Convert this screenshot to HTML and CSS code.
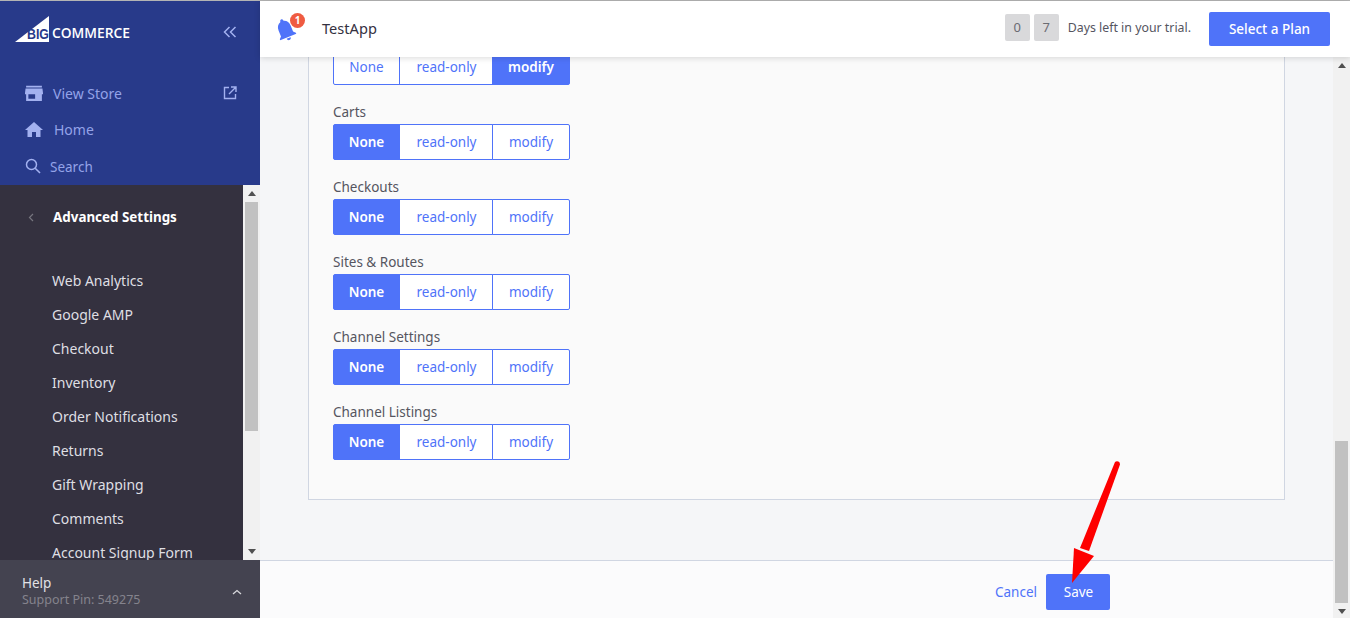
FILE: index.html
```html
<!DOCTYPE html>
<html>
<head>
  <title>TestApp</title>
  <link rel="stylesheet" href="styles.css">
</head>
<body>
  <div class="page">
    <aside class="sidebar">
      <div class="side-top">
        <div class="logo-row">
          <svg class="logo" width="120" height="28" viewBox="0 0 120 28">
            <path d="M0 26 L34 0 V26 Z" fill="#fff"/>
            <text x="12" y="23.300" class="logo-big" textLength="22" lengthAdjust="spacingAndGlyphs">BIG</text>
            <text x="37" y="22" class="logo-commerce">COMMERCE</text>
          </svg>
          <svg class="collapse" width="14" height="12" viewBox="0 0 14 12">
            <path d="M6.5 1 L1.5 6 L6.5 11 M12.5 1 L7.5 6 L12.5 11" fill="none" stroke="#a3b1f0" stroke-width="1.5"/>
          </svg>
        </div>
        <div class="side-link">
          <svg class="side-icon" width="18" height="16" viewBox="0 0 16 14"><path d="M1 0.5 H15 V2 H1 Z M0.5 3 H15.5 L16 7 V8 H15 V14 H1 V8 H0 V7 Z M3 8 V12 H9 V8 Z" fill="#a3b1f0" fill-rule="evenodd"/></svg>
          <span class="store-label">View Store</span>
          <svg class="external" width="14" height="14" viewBox="0 0 14 14"><path d="M6 1.500 H1.500 V12.500 H12.500 V8 M8 1 H13 V6 M13 1 L6 8" fill="none" stroke="#a3b1f0" stroke-width="1.4"/></svg>
        </div>
        <div class="side-link">
          <svg class="side-icon" width="18" height="15" viewBox="0 0 18 15"><path d="M7 15 V10 H11 V15 H15.5 V8 H18 L9 0 L0 8 H2.5 V15 Z" fill="#a3b1f0"/></svg>
          <span class="home-label">Home</span>
        </div>
        <div class="side-link">
          <svg class="side-icon" width="16" height="16" viewBox="0 0 16 16"><circle cx="6.5" cy="6.5" r="5" fill="none" stroke="#a3b1f0" stroke-width="1.5"/><path d="M10.200 10.200 L15 15" stroke="#a3b1f0" stroke-width="1.6"/></svg>
          <span class="search-label">Search</span>
        </div>
      </div>
      <div class="side-middle">
        <div class="side-menu">
          <div class="menu-title">
            <svg width="6" height="9" viewBox="0 0 6 9"><path d="M5 1 L1.5 4.5 L5 8" fill="none" stroke="#77767f" stroke-width="1.2"/></svg>
            <span>Advanced Settings</span>
          </div>
          <ul class="menu-list">
            <li>Web Analytics</li>
            <li>Google AMP</li>
            <li>Checkout</li>
            <li>Inventory</li>
            <li>Order Notifications</li>
            <li>Returns</li>
            <li>Gift Wrapping</li>
            <li>Comments</li>
            <li>Account Signup Form</li>
          </ul>
        </div>
        <div class="scrollbar scrollbar-side">
          <span class="arrow-up"></span>
          <div class="track"><div class="thumb thumb-side"></div></div>
          <span class="arrow-down"></span>
        </div>
      </div>
      <div class="side-help">
        <div>
          <div class="help-title">Help</div>
          <div class="help-pin">Support Pin: 549275</div>
        </div>
        <svg width="10" height="6" viewBox="0 0 10 6"><path d="M1 5 L5 1.5 L9 5" fill="none" stroke="#d8d8dc" stroke-width="1.3"/></svg>
      </div>
    </aside>

    <div class="main">
      <header class="topbar">
        <div class="bell">
          <svg width="26" height="26" viewBox="0 0 24 24"><g transform="rotate(-22 12 12)"><path d="M12 23c1.100 0 2-.9 2-2h-4c0 1.100.9 2 2 2zm6-6v-6c0-3.200-1.700-5.800-4.500-6.500V4c0-.8-.7-1.500-1.500-1.500s-1.500.7-1.500 1.500v.5C7.700 5.200 6 7.800 6 11v6l-2 2v1h16v-1l-2-2z" fill="#4f73f9"/></g></svg>
          <span class="bell-badge">1</span>
        </div>
        <div class="app-name">TestApp</div>
        <div class="trial">
          <span class="day-box">0</span>
          <span class="day-box">7</span>
          <span class="trial-text">Days left in your trial.</span>
          <button class="btn-primary plan-btn">Select a Plan</button>
        </div>
      </header>
      <div class="main-body">
        <div class="main-column">
          <div class="content">
            <div class="panel">
              <div class="choice first">
                <div class="btn-group">
                  <span class="seg seg-none">None</span><span class="seg seg-read">read-only</span><span class="seg seg-modify active">modify</span>
                </div>
              </div>
              <div class="choice">
                <label>Carts</label>
                <div class="btn-group">
                  <span class="seg seg-none active">None</span><span class="seg seg-read">read-only</span><span class="seg seg-modify">modify</span>
                </div>
              </div>
              <div class="choice">
                <label>Checkouts</label>
                <div class="btn-group">
                  <span class="seg seg-none active">None</span><span class="seg seg-read">read-only</span><span class="seg seg-modify">modify</span>
                </div>
              </div>
              <div class="choice">
                <label>Sites &amp; Routes</label>
                <div class="btn-group">
                  <span class="seg seg-none active">None</span><span class="seg seg-read">read-only</span><span class="seg seg-modify">modify</span>
                </div>
              </div>
              <div class="choice">
                <label>Channel Settings</label>
                <div class="btn-group">
                  <span class="seg seg-none active">None</span><span class="seg seg-read">read-only</span><span class="seg seg-modify">modify</span>
                </div>
              </div>
              <div class="choice">
                <label>Channel Listings</label>
                <div class="btn-group">
                  <span class="seg seg-none active">None</span><span class="seg seg-read">read-only</span><span class="seg seg-modify">modify</span>
                </div>
              </div>
            </div>
          </div>
          <footer class="footer">
            <a class="cancel">Cancel</a>
            <button class="btn-primary save-btn">Save</button>
          </footer>
        </div>
        <div class="scrollbar scrollbar-main">
          <span class="arrow-up"></span>
          <div class="track"><div class="thumb thumb-main"></div></div>
          <span class="arrow-down"></span>
        </div>
      </div>
    </div>

    <svg class="annotation" width="60" height="130" viewBox="0 0 60 130">
      <path d="M47 4 A3 3 0 0 1 52 6.500 L21 93 L12 90 Z" fill="#fe0000"/>
      <path d="M6 90 L26 98 L4 125 Z" fill="#fe0000"/>
    </svg>
  </div>
</body>
</html>
```

FILE: styles.css
```css
:root {
  --primary-color: #4f73f9;
  --border-color: #d0d6e2;
  --text-color: #55555f;
  --side-blue: #283a8a;
  --side-link: #94a3e8;
  --side-dark: #34313f;
  --side-help: #444350;
}

* {
  box-sizing: border-box;
}

html, body {
  margin: 0;
  height: 100%;
}

body {
  overflow: hidden;
  font-family: "Noto Sans", sans-serif;
  font-size: 14px;
  color: var(--text-color);
}

.page {
  position: relative;
  display: flex;
  height: 618px;
  border-top: 1px solid #b4b4b4;
}

/* sidebar */
.sidebar {
  width: 260px;
  flex-shrink: 0;
  display: flex;
  flex-direction: column;
}

.side-top {
  height: 184px;
  background-color: var(--side-blue);
  padding: 15px 23px 0 15px;
}

.logo-row {
  display: flex;
  justify-content: space-between;
  align-items: center;
  height: 28px;
  margin-bottom: 31px;
}

.logo-big {
  font-family: "Liberation Sans", sans-serif;
  font-size: 15px;
  font-weight: 700;
  fill: var(--side-blue);
}

.logo-commerce {
  font-family: "Open Sans", sans-serif;
  font-size: 13.8px;
  font-weight: 600;
  fill: #fff;
}

.collapse {
  margin-top: 4px;
}

.side-link {
  display: flex;
  align-items: center;
  height: 36.5px;
  padding-left: 10px;
  color: var(--side-link);
  font-size: 14px;
}

.store-label {
  margin-left: 10px;
  flex: 1;
}

.home-label {
  margin-left: 11px;
}

.search-label {
  margin: 2px 0 0 9px;
  font-size: 13.5px;
}

.side-middle {
  flex: 1;
  display: flex;
  min-height: 0;
  background-color: var(--side-dark);
}

.side-menu {
  flex: 1;
  overflow: hidden;
}

.menu-title {
  display: flex;
  align-items: center;
  height: 64px;
  padding-left: 28px;
  color: #fff;
  font-size: 13.4px;
  font-weight: 700;
}

.menu-title span {
  margin-left: 19px;
}

.menu-list {
  list-style: none;
  margin: 15px 0 0;
  padding: 0 0 0 52px;
}

.menu-list li {
  height: 34px;
  line-height: 34px;
  color: #dfdfe3;
  font-size: 14px;
  white-space: nowrap;
}

.side-help {
  height: 58px;
  display: flex;
  align-items: center;
  justify-content: space-between;
  padding: 5px 18px 0 22px;
  background-color: var(--side-help);
}

.help-title {
  color: #e2e2e6;
  font-size: 13.5px;
  line-height: 17px;
}

.help-pin {
  color: #84838d;
  font-size: 12.5px;
  line-height: 16px;
}

/* scrollbars */
.scrollbar {
  width: 17px;
  flex-shrink: 0;
  display: flex;
  flex-direction: column;
  align-items: center;
  background-color: #f1f1f1;
}

.arrow-up,
.arrow-down {
  flex-shrink: 0;
  width: 0;
  height: 0;
  margin: 6px 0;
  border-left: 4px solid transparent;
  border-right: 4px solid transparent;
}

.arrow-up {
  border-bottom: 5px solid #505050;
}

.arrow-down {
  border-top: 5px solid #505050;
}

.track {
  flex: 1;
  width: 13px;
}

.thumb {
  width: 13px;
  background-color: #c1c1c1;
}

.thumb-side {
  height: 229px;
}

.thumb-main {
  height: 162px;
  margin-top: 367px;
}

/* main */
.main {
  flex: 1;
  min-width: 0;
  display: flex;
  flex-direction: column;
  background-color: #f5f6f8;
}

.topbar {
  position: relative;
  z-index: 1;
  height: 56px;
  flex-shrink: 0;
  display: flex;
  align-items: center;
  padding: 0 20px 0 12px;
  background-color: #fff;
  box-shadow: 0 1px 6px rgba(0, 0, 0, 0.15);
}

.bell {
  position: relative;
  width: 26px;
  height: 26px;
}

.bell-badge {
  position: absolute;
  top: -3px;
  left: 18px;
  width: 15px;
  height: 15px;
  border-radius: 50%;
  background-color: #ef5b41;
  color: #fff;
  font-size: 10px;
  font-weight: 700;
  line-height: 15px;
  text-align: center;
}

.app-name {
  flex: 1;
  margin: 0 0 3px 24px;
  color: #34313f;
  font-size: 14.6px;
}

.trial {
  display: flex;
  align-items: center;
}

.day-box {
  width: 25px;
  height: 27px;
  margin: 0 4px 3px 0;
  border-radius: 2px;
  background-color: #d9d9db;
  color: #6b6b72;
  font-size: 13px;
  line-height: 27px;
  text-align: center;
}

.trial-text {
  margin: 0 18px 3px 5px;
  font-size: 12.35px;
}

.btn-primary {
  border: none;
  border-radius: 2px;
  background-color: var(--primary-color);
  color: #fff;
  font-family: inherit;
  font-size: 13.5px;
  font-weight: 500;
}

.plan-btn {
  width: 121px;
  height: 34px;
}

.main-body {
  flex: 1;
  min-height: 0;
  display: flex;
}

.main-column {
  flex: 1;
  min-width: 0;
  display: flex;
  flex-direction: column;
}

.content {
  flex: 1;
  min-height: 0;
  overflow: hidden;
  padding-left: 48px;
}

.panel {
  width: 977px;
  margin-top: -9px;
  padding: 0 24px 39px;
  background-color: #fafafa;
  border: 1px solid var(--border-color);
}

.choice {
  margin-top: 17px;
}

.choice.first {
  margin-top: 0;
}

.choice label {
  display: block;
  height: 20px;
  margin-bottom: 2px;
  font-size: 13.5px;
  line-height: 20px;
}

.btn-group {
  display: flex;
  width: 237px;
  height: 36px;
}

.seg {
  height: 36px;
  border: 1px solid var(--primary-color);
  margin-left: -1px;
  background-color: #fff;
  color: var(--primary-color);
  font-size: 13.5px;
  line-height: 35px;
  text-align: center;
}

.seg-none {
  width: 67px;
  margin-left: 0;
  border-radius: 2px 0 0 2px;
}

.seg-read {
  width: 94px;
  padding-left: 1px;
}

.seg-modify {
  width: 78px;
  border-radius: 0 2px 2px 0;
}

.seg.active {
  background-color: var(--primary-color);
  color: #fff;
  font-weight: 600;
}

.footer {
  height: 58px;
  flex-shrink: 0;
  display: flex;
  align-items: center;
  justify-content: flex-end;
  gap: 9px;
  padding: 4px 223px 0 0;
  background-color: #fbfbfc;
  border-top: 1px solid var(--border-color);
}

.cancel {
  color: var(--primary-color);
  font-size: 13.5px;
}

.save-btn {
  width: 64px;
  height: 36px;
  font-weight: 400;
  padding-left: 7px;
}

.annotation {
  position: absolute;
  left: 1068px;
  top: 457px;
}
```
